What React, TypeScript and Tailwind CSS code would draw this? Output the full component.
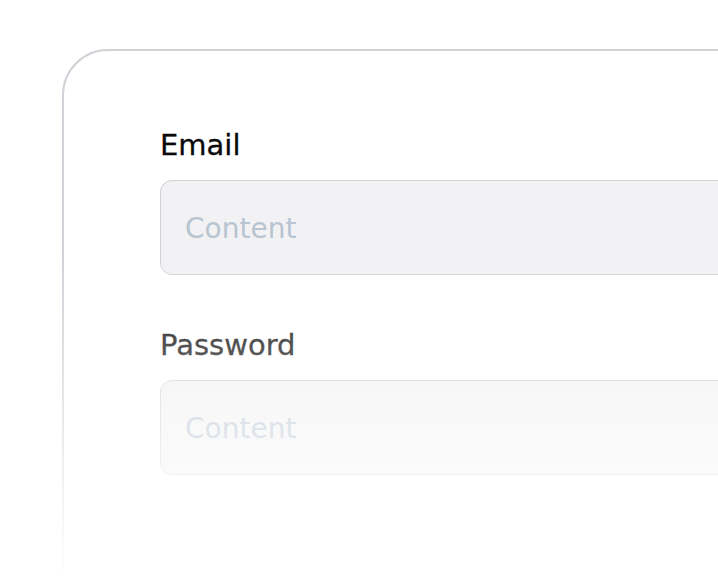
export default function App() {
  const font = { fontFamily: '"DejaVu Sans", "Noto Sans", sans-serif' };
  return (
    <div className="relative w-[718px] h-[588px] overflow-hidden bg-white" style={font}>
      <div className="pt-[49px] pl-[62px]">
        <div className="w-[760px] h-[531px] rounded-tl-[46px] rounded-bl-[6px] border-2 border-[#cfd2d7] bg-white pl-[96px] pt-[74px]">
          <div className="text-[29px] leading-[40px] text-[#0a0a0a] [-webkit-text-stroke:0.3px_#0a0a0a]">Email</div>
          <div className="mt-[15px] h-[95px] rounded-[12px] border border-[#d0d1d7] bg-[#f2f2f4] flex items-center pl-[24px] pt-[3px]">
            <span className="text-[28px] tracking-[0px] text-[#b8c4d1]">Content</span>
          </div>
          <div className="mt-[50px] text-[29px] leading-[40px] text-[#0a0a0a] [-webkit-text-stroke:0.3px_#0a0a0a]">Password</div>
          <div className="mt-[15px] h-[95px] rounded-[12px] border border-[#d0d1d7] bg-[#f2f2f4] flex items-center pl-[24px] pt-[3px]">
            <span className="text-[28px] tracking-[0px] text-[#b8c4d1]">Content</span>
          </div>
        </div>
      </div>
      <div className="absolute left-0 right-0 top-[250px] h-[330px] bg-linear-to-b from-white/0 to-white" />
      <div className="absolute left-0 right-0 top-[580px] h-[8px] bg-white" />
    </div>
  );
}
